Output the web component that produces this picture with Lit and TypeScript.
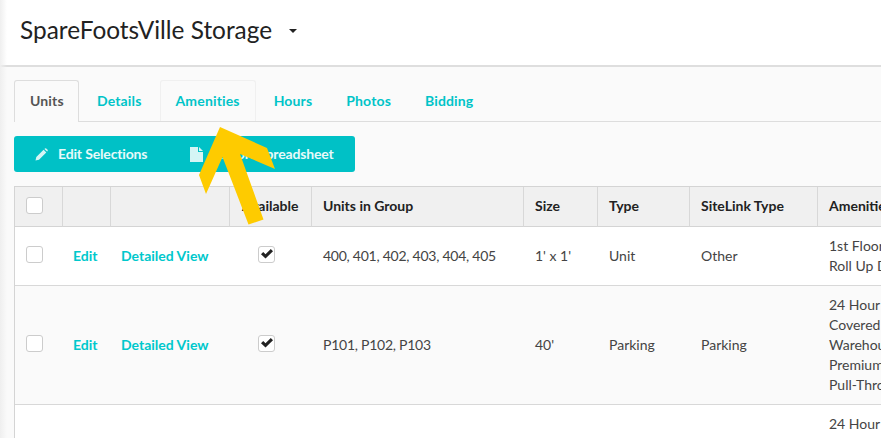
import { LitElement, html, css, svg } from "lit";
import { customElement } from "lit/decorators.js";

const box = (checked = false) => html`<span class="box">${checked
  ? html`<svg viewBox="0 0 14 12" width="14" height="12"><path d="M1 6.2 L3.2 4 L5.5 6.3 L10.8 1 L13 3.2 L5.5 10.6 Z" fill="#222"/></svg>`
  : ""}</span>`;

const rows = [
  { units: "400, 401, 402, 403, 404, 405", size: "1' x 1'", type: "Unit", link: "Other", am: ["1st Floor Access", "Roll Up Door"] },
  { units: "P101, P102, P103", size: "40'", type: "Parking", link: "Parking", am: ["24 Hour Access", "Covered Parking", "Warehouse Access", "Premium Location", "Pull-Through Access"] },
  { units: "P104, P105", size: "40'", type: "Parking", link: "Parking", am: ["24 Hour Access", "Covered Parking", "Warehouse Access", "Premium Location", "Pull-Through Access"] },
];

@customElement("app-root")
export class AppRoot extends LitElement {
  static styles = css`
    :host { display: block; position: relative; width: 881px; height: 438px; overflow: hidden; background: #fafafa; font-family: Lato, "Open Sans", sans-serif; font-size: 14px; color: #333; }
    * { box-sizing: border-box; }
    .header { height: 67px; background: #fff; border-bottom: 2px solid #dedede; padding: 15px 0 0 20px; display: flex; align-items: flex-start; }
    .title { font-size: 24.4px; line-height: 29px; color: #222; }
    .caret { width: 0; height: 0; margin: 14px 0 0 17px; border: 4.5px solid transparent; border-top-color: #222; border-bottom-width: 0; }
    .main { padding: 13px 0 0 14px; }
    .tabs { display: flex; height: 42px; width: 867px; border-bottom: 1px solid #ddd; font-weight: 700; letter-spacing: 0.15px; }
    .tab { height: 42px; margin-right: 2px; padding: 11px 15px 0; color: #00c4c8; line-height: 17px; border: 1px solid transparent; border-bottom: 0; border-radius: 3px 3px 0 0; }
    .tab.active { background: #fafafa; color: #555; border-color: #ddd; width: 65px; }
    .tab.hover { border-color: #f0f0f0; height: 41px; }
    .toolbar { display: inline-flex; align-items: center; height: 36px; margin-top: 14px; background: #00c1c6; border-radius: 3px; color: #e6fafa; font-weight: 700; padding-left: 21px; letter-spacing: -0.15px; line-height: 34px; }
    .toolbar span { display: inline-flex; align-items: center; }
    .toolbar svg { display: block; }
    .b1 { gap: 10px; width: 155px; }
    .b2 { gap: 11px; padding-right: 21px; }
    table { margin-top: 14px; border-collapse: separate; border-spacing: 0; table-layout: fixed; width: 1017px; border-left: 1px solid #d4d4d4; border-top: 1px solid #d4d4d4; }
    th { height: 40px; background: #f0f0f0; color: #222; text-align: left; font-weight: 700; padding: 0 11px 2px; border-right: 1px solid #d8d8d8; border-bottom: 1px solid #d4d4d4; }
    th.av { padding-left: 12px; }
    td { padding: 9px 11px; line-height: 20px; border-bottom: 1px solid #d8d8d8; color: #444; vertical-align: middle; }
    td.link { padding-left: 10px; }
    td.chk { padding-left: 28px; }
    td.units { white-space: nowrap; letter-spacing: -0.25px; }
    tbody tr:nth-child(even) td { background: #fafafa; }
    tbody tr:nth-child(odd) td { background: #fff; }
    tbody tr:first-child td { height: 59px; }
    a { color: #00c8cc; font-weight: 700; text-decoration: none; white-space: nowrap; }
    .nowrap { white-space: nowrap; }
    .box { display: inline-block; vertical-align: middle; width: 17px; height: 17px; margin-top: -6px; background: #fff; border: 1px solid #ccc; border-radius: 3px; padding: 1px 0 0 1px; }
    th .box { margin-top: -4px; }
    .box svg { display: block; }
    .am div { white-space: nowrap; }
    .shade { position: absolute; left: 0; top: 67px; bottom: 0; width: 7px; background: linear-gradient(to right, #efefef, #fafafa00); pointer-events: none; }
    .shade.t { top: 0; height: 67px; bottom: auto; }
    .arrow { position: absolute; left: 0; top: 0; pointer-events: none; }
  `;

  render() {
    return html`
      <div class="header"><span class="title">SpareFootsVille Storage</span><span class="caret"></span></div>
      <div class="main">
        <div class="tabs">
          <div class="tab active">Units</div>
          <div class="tab">Details</div>
          <div class="tab hover">Amenities</div>
          <div class="tab">Hours</div>
          <div class="tab">Photos</div>
          <div class="tab">Bidding</div>
        </div>
        <div class="toolbar">
          <span class="b1">
            <svg width="13" height="13" viewBox="0 0 13 13"><path d="M0.5 12.5 L1.3 9 L8.6 1.7 L11.3 4.4 L4 11.7 Z M9.4 0.9 L10 0.4 Q10.6 0 11.2 0.4 L12.6 1.8 Q13 2.4 12.6 3 L12.1 3.6 Z" fill="#d5f5f5"/></svg>
            Edit Selections
          </span>
          <span class="b2">
            <svg width="13" height="15" viewBox="0 0 13 15"><path d="M0 0 H8 V5 H13 V15 H0 Z M9 0 L13 4 H9 Z" fill="#d5f5f5"/></svg>
            Export Spreadsheet
          </span>
        </div>
        <table>
          <colgroup>
            <col style="width:48px"/><col style="width:48px"/><col style="width:119px"/><col style="width:82px"/><col style="width:212px"/><col style="width:74px"/><col style="width:92px"/><col style="width:128px"/><col style="width:214px"/>
          </colgroup>
          <thead><tr>
            <th>${box()}</th><th></th><th></th><th class="nowrap av">Available</th><th>Units in Group</th><th>Size</th><th>Type</th><th class="nowrap">SiteLink Type</th><th class="nowrap">Amenities</th>
          </tr></thead>
          <tbody>
            ${rows.map(r => html`<tr>
              <td>${box()}</td>
              <td class="link"><a>Edit</a></td>
              <td class="link"><a>Detailed View</a></td>
              <td class="chk">${box(true)}</td>
              <td class="units">${r.units}</td>
              <td>${r.size}</td>
              <td>${r.type}</td>
              <td>${r.link}</td>
              <td class="am">${r.am.map(a => html`<div>${a}</div>`)}</td>
            </tr>`)}
          </tbody>
        </table>
      </div>
      <div class="shade"></div>
      <div class="shade t"></div>
      <svg class="arrow" width="881" height="438">${svg`<path d="M220 127 L267 148 L275 169 L240 154 L263.500 219.500 L248.500 224.500 L222.500 157 L206 194 L199 175 Z" fill="#fecb00"/>`}</svg>
    `;
  }
}
